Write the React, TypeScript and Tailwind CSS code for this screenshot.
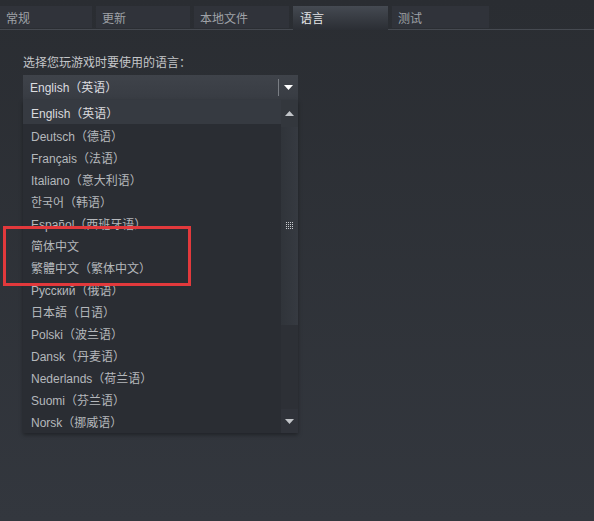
const TABS = [
  { id: 'general', label: '常规', w: 'w-[92px]' },
  { id: 'updates', label: '更新', w: 'w-[94px]' },
  { id: 'local', label: '本地文件', w: 'w-[95px]' },
  { id: 'language', label: '语言', w: 'w-[95px]', active: true },
  { id: 'betas', label: '测试', w: 'w-[97px]' },
];

const LANGUAGES = [
  'English（英语）',
  'Deutsch（德语）',
  'Français（法语）',
  'Italiano（意大利语）',
  '한국어（韩语）',
  'Español（西班牙语）',
  '简体中文',
  '繁體中文（繁体中文）',
  'Русский（俄语）',
  '日本語（日语）',
  'Polski（波兰语）',
  'Dansk（丹麦语）',
  'Nederlands（荷兰语）',
  'Suomi（芬兰语）',
  'Norsk（挪威语）',
];

function Caret({ up = false, className = '' }: { up?: boolean; className?: string }) {
  return (
    <svg width="9" height="5" viewBox="0 0 9 5" className={className}>
      <path d={up ? 'M0 5 L4.5 0 L9 5 Z' : 'M0 0 L9 0 L4.5 5 Z'} fill="currentColor" />
    </svg>
  );
}

function Grip() {
  return (
    <svg width="8" height="8" viewBox="0 0 8 8">
      {[0, 2, 4, 6].map((y) =>
        [0, 2, 4, 6].map((x) => <rect key={`${x}-${y}`} x={x} y={y} width="1" height="1" fill="#c9ccd0" />)
      )}
    </svg>
  );
}

export default function App() {
  return (
    <div
      className="relative w-[594px] h-[521px] overflow-hidden bg-gradient-to-b from-[#2a2d32] to-[#33373e] text-[12px]"
      style={{ fontFamily: '"Liberation Sans", "Noto Sans CJK SC", sans-serif' }}
    >
      {/* tabs */}
      <div className="pt-[6px] border-b border-[#464a51]">
        <div className="flex gap-[4px] h-[23px]">
          {TABS.map((t) => (
            <div
              key={t.id}
              className={
                t.active
                  ? `${t.w} h-[24px] -mb-[1px] pl-[7px] pt-[4px] bg-gradient-to-b from-[#454a52] to-[#2b2e34] text-[#e4e5e7]`
                  : `${t.w} h-[22px] pl-[6px] pt-[4px] bg-[#30333a] text-[#9fa2a7]`
              }
            >
              {t.label}
            </div>
          ))}
        </div>
      </div>

      <div className="pl-[23px] pt-[26px]">
        <p className="text-[#c4c6c9] leading-[14px]">选择您玩游戏时要使用的语言：</p>

        {/* select */}
        <div className="mt-[5px] w-[275px] h-[25px] flex items-center bg-gradient-to-b from-[#3f434a] to-[#383c43]">
          <span className="flex-1 pl-[7px] text-[#dcdde0]">English（英语）</span>
          <div className="w-[1px] h-[17px] bg-[#7a7e84]" />
          <div className="w-[19px] flex justify-center text-white">
            <Caret />
          </div>
        </div>

        {/* list */}
        <div className="w-[275px] h-[333px] flex bg-[#2a2d33] shadow-[0_2px_4px_rgba(0,0,0,0.35)]">
          <div className="flex-1">
            {LANGUAGES.map((lang, i) => (
              <div
                key={lang}
                className={`h-[22px] pl-[8px] pt-[3px] flex items-center ${
                  i === 0 ? 'h-[24px] bg-[#363a41] text-[#dadbde]' : 'text-[#b5b8bc]'
                }`}
              >
                {lang}
              </div>
            ))}
          </div>
          <div className="w-[17px] flex flex-col bg-[#2d3036]">
            <div className="h-[27px] flex items-center justify-center bg-[#33373d] text-[#c2c5c9]">
              <Caret up />
            </div>
            <div className="h-[198px] flex items-center justify-center bg-gradient-to-r from-[#30343a] to-[#363a41]">
              <Grip />
            </div>
            <div className="flex-1" />
            <div className="h-[24px] flex items-center justify-center bg-[#30333a] text-[#c2c5c9]">
              <Caret />
            </div>
          </div>
        </div>
      </div>

      {/* annotation */}
      <div className="absolute left-[3px] top-[226px] w-[188px] h-[60px] border-[3px] border-[#e2393c]" />
    </div>
  );
}
